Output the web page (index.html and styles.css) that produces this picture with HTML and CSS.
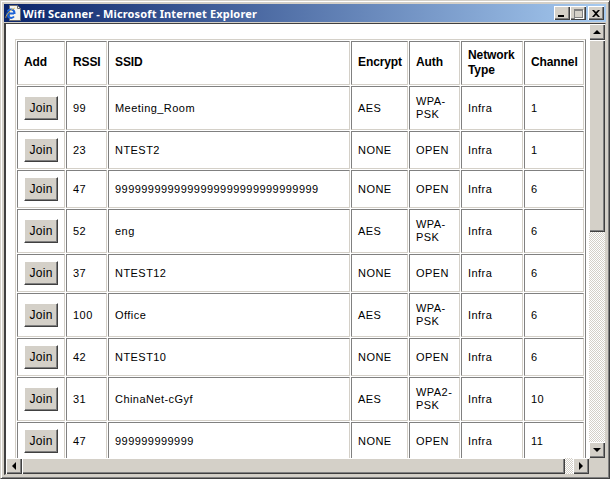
FILE: index.html
```html
<!DOCTYPE html>
<html>
<head>
<meta charset="utf-8">
<title>Wifi Scanner</title>
<link rel="stylesheet" href="styles.css">
</head>
<body>
<div class="window">
  <div class="titlebar">
    <svg class="ie-icon" width="16" height="16" viewBox="0 0 16 16"><path d="M4.500.5h8l3 3v12h-11z" fill="#f4f4ee" stroke="#707070"/><path d="M12.500.5v3h3" fill="none" stroke="#707070"/><path d="M1.500 8.500h7.500M2.500 6.500a3.700 3.700 0 0 1 7 1.500v1M9 11.500a3.700 3.700 0 0 1-6.500-1.500V8" fill="none" stroke="#1a62d6" stroke-width="2"/><path d="M1 13c-1-1 3-8 9-10" fill="none" stroke="#f0c040" stroke-width=".8"/></svg>
    <span class="title-text">Wifi Scanner - Microsoft Internet Explorer</span>
    <div class="caption-buttons">
      <div class="cap-btn"><span class="glyph-min"></span></div>
      <div class="cap-btn"><span class="glyph-max"></span></div>
      <div class="cap-btn cap-close"><svg width="8" height="7" viewBox="0 0 8 7"><path d="M0 0h2l2 2 2-2h2L5 3.500 8 7H6L4 5 2 7H0l3-3.500z" fill="#000"/></svg></div>
    </div>
  </div>
  <div class="client">
    <div class="main-row">
      <div class="viewport">
        <table class="scan">
          <tr class="h"><th>Add</th><th>RSSI</th><th>SSID</th><th>Encrypt</th><th>Auth</th><th>Network Type</th><th>Channel</th></tr>
          <tr class="tall"><td><button class="join">Join</button></td><td>99</td><td>Meeting_Room</td><td>AES</td><td>WPA-PSK</td><td>Infra</td><td>1</td></tr>
          <tr><td><button class="join">Join</button></td><td>23</td><td>NTEST2</td><td>NONE</td><td>OPEN</td><td>Infra</td><td>1</td></tr>
          <tr><td><button class="join">Join</button></td><td>47</td><td>9999999999999999999999999999999</td><td>NONE</td><td>OPEN</td><td>Infra</td><td>6</td></tr>
          <tr class="tall"><td><button class="join">Join</button></td><td>52</td><td>eng</td><td>AES</td><td>WPA-PSK</td><td>Infra</td><td>6</td></tr>
          <tr><td><button class="join">Join</button></td><td>37</td><td>NTEST12</td><td>NONE</td><td>OPEN</td><td>Infra</td><td>6</td></tr>
          <tr class="tall"><td><button class="join">Join</button></td><td>100</td><td>Office</td><td>AES</td><td>WPA-PSK</td><td>Infra</td><td>6</td></tr>
          <tr><td><button class="join">Join</button></td><td>42</td><td>NTEST10</td><td>NONE</td><td>OPEN</td><td>Infra</td><td>6</td></tr>
          <tr class="tall"><td><button class="join">Join</button></td><td>31</td><td>ChinaNet-cGyf</td><td>AES</td><td>WPA2-PSK</td><td>Infra</td><td>10</td></tr>
          <tr><td><button class="join">Join</button></td><td>47</td><td>999999999999</td><td>NONE</td><td>OPEN</td><td>Infra</td><td>11</td></tr>
        </table>
      </div>
      <div class="vbar">
        <div class="sb-btn"><span class="arrow-up"></span></div>
        <div class="v-thumb"></div>
        <div class="v-track"></div>
        <div class="sb-btn"><span class="arrow-down"></span></div>
      </div>
    </div>
    <div class="hbar">
      <div class="sb-btn"><span class="arrow-left"></span></div>
      <div class="h-thumb"></div>
      <div class="h-track"></div>
      <div class="sb-btn"><span class="arrow-right"></span></div>
      <div class="corner"></div>
    </div>
  </div>
</div>
</body>
</html>
```
FILE: styles.css
```css
html, body { margin: 0; padding: 0; width: 610px; height: 479px; overflow: hidden; }
.window { box-sizing: border-box; width: 610px; height: 479px; background: #d4d0c8; display: flex; flex-direction: column; padding: 3px; border: 1px solid; border-color: #d4d0c8 #404040 #404040 #d4d0c8; box-shadow: inset 1px 1px 0 #fff, inset -1px -1px 0 #808080; font-family: "Liberation Sans", Arial, sans-serif; }
.titlebar { height: 18px; flex: none; display: flex; align-items: center; background: linear-gradient(90deg, #0a246a, #a6caf0); padding: 0 2px 0 1px; color: #fff; }
.ie-icon { flex: none; margin-right: 2px; }
.title-text { font-size: 11px; font-weight: 700; letter-spacing: 0.15px; font-family: "Noto Sans", sans-serif; white-space: nowrap; flex: 1; }
.caption-buttons { display: flex; flex: none; }
.cap-btn { box-sizing: border-box; width: 16px; height: 14px; background: #d4d0c8; box-shadow: inset 1px 1px 0 #fff, inset -1px -1px 0 #404040, inset -2px -2px 0 #808080; display: flex; align-items: center; justify-content: center; }
.cap-close { margin-left: 2px; }
.glyph-min { width: 6px; height: 2px; background: #000; margin-top: 6px; margin-right: 2px; }
.glyph-max { box-sizing: border-box; width: 9px; height: 9px; border: 1px solid #808080; border-top-width: 2px; box-shadow: 1px 1px 0 #fff; }
.client { flex: 1; min-height: 0; margin-top: 1px; display: flex; flex-direction: column; border-style: solid; border-width: 1px 1px 1px 2px; border-color: #404040 #d4d0c8 #d4d0c8 #404040; background: #d4d0c8; }
.main-row { flex: 1; min-height: 0; display: flex; }
.viewport { flex: 1; min-width: 0; background: #fff; overflow: hidden; padding: 15px 0 0 9px; }
.scan { border-collapse: separate; border-spacing: 1px; border: 1px solid; border-color: #d4d0c8 #808080 #808080 #d4d0c8; width: 571px; table-layout: fixed; font-size: 11px; color: #000; font-family: "Liberation Sans", Arial, sans-serif; }
.scan th, .scan td { box-sizing: border-box; border: 1px solid; border-color: #808080 #d4d0c8 #d4d0c8 #808080; padding: 0 6px; text-align: left; height: 38px; letter-spacing: 0.45px; font-weight: 400; line-height: 13px; }
.scan th { font-weight: 700; height: 44px; font-size: 12px; letter-spacing: -0.1px; line-height: 15px; padding-bottom: 1px; }
.scan tr.tall td { height: 44px; }
.scan th:nth-child(1) { width: 48px; }
.scan th:nth-child(2) { width: 41px; }
.scan th:nth-child(3) { width: 242px; }
.scan th:nth-child(4) { width: 57px; }
.scan th:nth-child(5) { width: 51px; }
.scan th:nth-child(6) { width: 62px; }
.scan th:nth-child(7) { width: 60px; }
.join { box-sizing: border-box; display: block; width: 34px; height: 24px; margin: 0; padding: 0; background: #d4d0c8; border: 1px solid; border-color: #fff #404040 #404040 #fff; box-shadow: inset -1px -1px 0 #808080; font: 12px "Liberation Sans", Arial, sans-serif; color: #000; letter-spacing: 0.3px; }
.vbar { flex: none; width: 16px; display: flex; flex-direction: column; background-color: #efeeea; background-image: repeating-conic-gradient(#d4d0c8 0 25%, #fff 0 50%); background-size: 2px 2px; }
.v-thumb { flex: none; height: 192px; background: #d4d0c8; box-shadow: inset 1px 1px 0 #fff, inset -1px -1px 0 #404040, inset -2px -2px 0 #808080; }
.v-track { flex: 1; }
.hbar { flex: none; height: 16px; display: flex; background-color: #efeeea; background-image: repeating-conic-gradient(#d4d0c8 0 25%, #fff 0 50%); background-size: 2px 2px; }
.h-thumb { flex: none; width: 543px; background: #d4d0c8; box-shadow: inset 1px 1px 0 #fff, inset -1px -1px 0 #404040, inset -2px -2px 0 #808080; }
.h-track { flex: 1; }
.corner { flex: none; width: 16px; background: #d4d0c8; }
.sb-btn { box-sizing: border-box; flex: none; width: 16px; height: 16px; background: #d4d0c8; box-shadow: inset 1px 1px 0 #fff, inset -1px -1px 0 #404040, inset -2px -2px 0 #808080; display: flex; align-items: center; justify-content: center; }
.arrow-up, .arrow-down, .arrow-left, .arrow-right { width: 0; height: 0; border: 4px solid transparent; }
.arrow-up { border-bottom-color: #000; border-top-width: 0; }
.arrow-down { border-top-color: #000; border-bottom-width: 0; }
.arrow-left { border-right-color: #000; border-left-width: 0; }
.arrow-right { border-left-color: #000; border-right-width: 0; }
```
